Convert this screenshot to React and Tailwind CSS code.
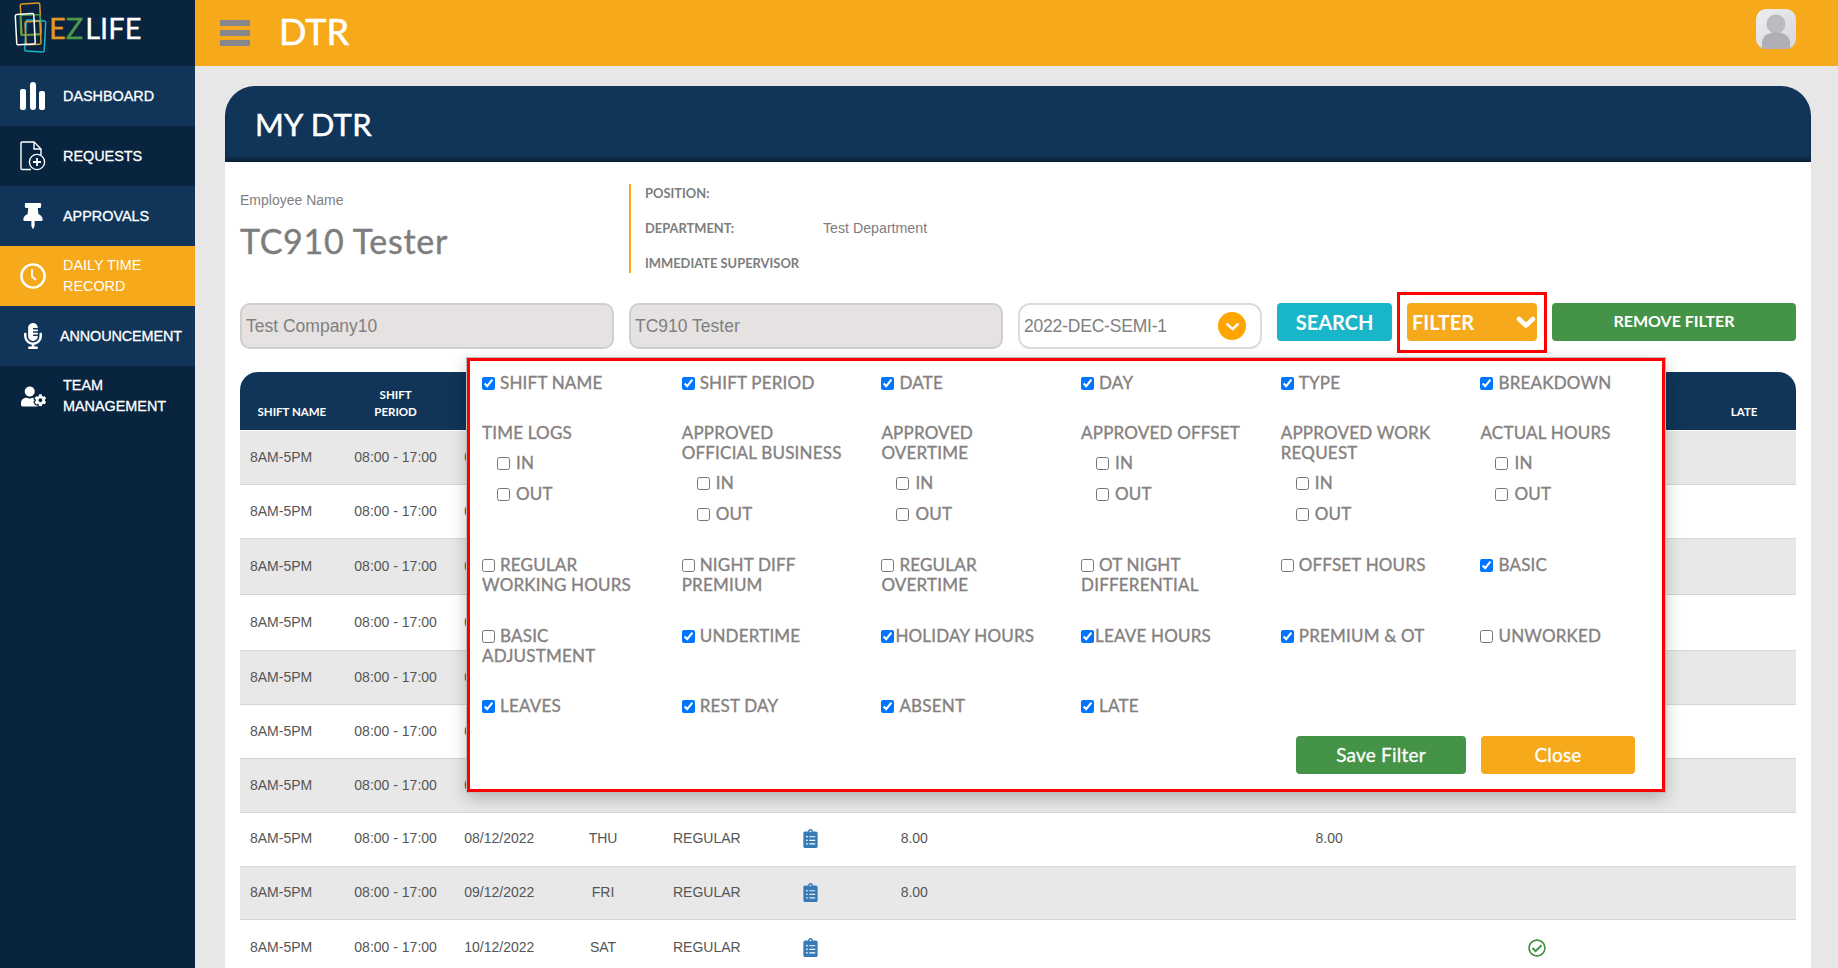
import React from "react";
import { FaThumbtack, FaMicrophoneAlt, FaUserCog, FaClipboardList, FaRegCheckCircle } from "react-icons/fa";

const lato = "font-['Lato','Noto_Sans',sans-serif]";

function DashIcon() {
  return (
    <svg width="26" height="28" viewBox="0 0 26 28" fill="white">
      <rect x="0" y="7" width="6" height="21" rx="2" />
      <rect x="10" y="0" width="6" height="28" rx="3" />
      <rect x="19" y="9" width="6" height="19" rx="2" />
    </svg>
  );
}
function ReqIcon() {
  return (
    <svg width="26" height="30" viewBox="0 0 26 30" fill="none" stroke="white" strokeWidth="1.4">
      <path d="M11 28.500H2a1 1 0 0 1-1-1V2a1 1 0 0 1 1-1h12l7 7v6" />
      <path d="M14 1v7h7" />
      <circle cx="17" cy="21" r="7.600" />
      <path d="M17 17v8M13 21h8" strokeWidth="1.8" />
    </svg>
  );
}
function ClockIcon() {
  return (
    <svg width="26" height="26" viewBox="0 0 26 26" fill="none" stroke="white">
      <circle cx="13" cy="13" r="11.600" strokeWidth="2.4" />
      <path d="M12 6v7.500l4 3.500" strokeWidth="1.8" />
    </svg>
  );
}
function Logo() {
  return (
    <svg width="34" height="54" viewBox="0 0 34 54" fill="none" className="shrink-0">
      <rect x="7" y="3.500" width="19.500" height="31" rx="1.500" stroke="#e09a24" strokeWidth="1.5" transform="rotate(-3 17 19)" />
      <rect x="6.500" y="15" width="20" height="20" rx="1.500" stroke="#4c9a47" strokeWidth="1.5" transform="rotate(-2 17 25)" />
      <rect x="11.500" y="20.500" width="19.500" height="31" rx="1.500" stroke="#19b5c9" strokeWidth="1.5" transform="rotate(3 21 36)" />
      <rect x="11.500" y="21.500" width="15" height="23" rx="1.500" stroke="#e09a24" strokeWidth="1.5" transform="rotate(-3 19 33)" />
      <rect x="2" y="14" width="18.500" height="30.500" rx="1.500" stroke="#ffffff" strokeWidth="1.5" transform="rotate(-3 11 29)" />
    </svg>
  );
}
function Avatar() {
  return (
    <svg width="40" height="40" viewBox="0 0 40 40">
      <defs>
        <linearGradient id="avbg" x1="0" y1="0" x2="1" y2="1">
          <stop offset="0" stopColor="#eceef0" />
          <stop offset="1" stopColor="#d5d7da" />
        </linearGradient>
      </defs>
      <rect width="40" height="40" rx="10" fill="url(#avbg)" />
      <circle cx="20" cy="15" r="9.500" fill="#b9bbc0" />
      <path d="M6 40v-6c0-7 6-10.500 14-10.500S34 27 34 34v6z" fill="#aeb0b5" />
    </svg>
  );
}
function Chev({ w, h, sw }) {
  return (
    <svg width={w} height={h} viewBox="0 0 20 12" fill="none" stroke="white" strokeWidth={sw} strokeLinecap="round" strokeLinejoin="round">
      <path d="M3 3l7 6.500L17 3" />
    </svg>
  );
}

const nav = [
  { label: ["DASHBOARD"], icon: <DashIcon />, bg: "bg-[#103558]" },
  { label: ["REQUESTS"], icon: <ReqIcon />, bg: "bg-[#08243f]" },
  { label: ["APPROVALS"], icon: <FaThumbtack size={26} color="white" />, bg: "bg-[#103558]" },
  { label: ["DAILY TIME", "RECORD"], icon: <ClockIcon />, bg: "bg-[#f6a91b]", thin: true },
  { label: ["ANNOUNCEMENT"], icon: <FaMicrophoneAlt size={26} color="white" />, bg: "bg-[#103558]", tight: true },
  { label: ["TEAM", "MANAGEMENT"], icon: <FaUserCog size={25} color="white" />, bg: "bg-[#08243f]" },
];

const heads = [["SHIFT NAME"], ["SHIFT", "PERIOD"], [""], [""], [""], [""], [""], [""], [""], [""], [""], [""], [""], [""], ["LATE"]];
const days = ["THU", "FRI", "SAT", "SUN", "MON", "TUE", "WED", "THU", "FRI", "SAT"];
const rowH = ["h-[54px]", "h-[54px]", "h-[56px]", "h-[56px]", "h-[54px]", "h-[54px]", "h-[54px]", "h-[54px] pb-[2px]", "h-[53px] pb-[1px]", "h-[56px]"];

function Row({ i }) {
  const d = String(i + 1).padStart(2, "0");
  const shown = i >= 7;
  const isSat = i === 9;
  const cells = [
    "08:00 - 17:00",
    `${d}/12/2022`,
    shown ? days[i] : "",
    shown ? "REGULAR" : "",
    shown ? <FaClipboardList size={19} color="#337ab7" className="mx-auto" /> : "",
    shown && !isSat ? "8.00" : "",
    "", "", "",
    i === 7 ? "8.00" : "",
    "",
    isSat ? <FaRegCheckCircle size={18} color="#449347" className="mx-auto" /> : "",
    "", "",
  ];
  return (
    <div className={`grid grid-cols-[repeat(15,minmax(0,1fr))] items-center ${rowH[i]} border-b border-[#d5d5d5] text-[14px] text-[#555] text-center ${i % 2 === 0 ? "bg-[#e8e8e8]" : "bg-white"}`}>
      <div className="text-left pl-[10px]">8AM-5PM</div>
      {cells.map((c, k) => <div key={k}>{c}</div>)}
    </div>
  );
}

function Chk({ label, checked, tight, sub }) {
  return (
    <label className="block leading-[20px]">
      <input type="checkbox" defaultChecked={checked} className={`align-[-1px] m-0 w-[13px] h-[13px] ${tight ? "mr-[1px]" : sub ? "mr-[6px]" : "mr-[5px]"}`} />
      {label}
    </label>
  );
}
function Group({ title, second }) {
  return (
    <div>
      <div className="leading-[20px]">{title}{second && <><br />{second}</>}</div>
      <div className="pl-[15px] mt-[5px] flex flex-col">
        <div className="h-[30px] flex items-center"><Chk label="IN" sub /></div>
        <div className="h-[31px] flex items-center"><Chk label="OUT" sub /></div>
      </div>
    </div>
  );
}

function Popup() {
  return (
    <div className={`absolute left-[242px] top-[272px] w-[1198px] h-[434px] bg-white border-[3px] border-[#f00] outline outline-1 outline-[#bbb] shadow-[0_6px_16px_rgba(0,0,0,0.25)] pt-[12px] pl-[12px] pr-[27px] text-[#858180] text-[17px] tracking-[0.2px] [-webkit-text-stroke:0.35px] z-10 ${lato}`}>
      <div className="grid grid-cols-[repeat(5,199.7px)_1fr] grid-rows-[50px_132px_71px_70px_20px]">
        <Chk label="SHIFT NAME" checked />
        <Chk label="SHIFT PERIOD" checked />
        <Chk label="DATE" checked />
        <Chk label="DAY" checked />
        <Chk label="TYPE" checked />
        <Chk label="BREAKDOWN" checked />

        <Group title="TIME LOGS" />
        <Group title="APPROVED" second="OFFICIAL BUSINESS" />
        <Group title="APPROVED" second="OVERTIME" />
        <Group title="APPROVED OFFSET" />
        <Group title="APPROVED WORK" second="REQUEST" />
        <Group title="ACTUAL HOURS" />

        <Chk label={<>REGULAR<br />WORKING HOURS</>} />
        <Chk label={<>NIGHT DIFF<br />PREMIUM</>} />
        <Chk label={<>REGULAR<br />OVERTIME</>} />
        <Chk label={<>OT NIGHT<br />DIFFERENTIAL</>} />
        <Chk label="OFFSET HOURS" />
        <Chk label="BASIC" checked />

        <Chk label={<>BASIC<br />ADJUSTMENT</>} />
        <Chk label="UNDERTIME" checked />
        <Chk label="HOLIDAY HOURS" checked tight />
        <Chk label="LEAVE HOURS" checked tight />
        <Chk label="PREMIUM & OT" checked />
        <Chk label="UNWORKED" />

        <Chk label="LEAVES" checked />
        <Chk label="REST DAY" checked />
        <Chk label="ABSENT" checked />
        <Chk label="LATE" checked />
      </div>
      <div className="flex justify-end gap-[15px] mt-[20px] [-webkit-text-stroke:0.3px_white]">
        <button className="w-[170px] h-[38px] rounded-[4px] bg-[#449347] text-white text-[19px]">Save Filter</button>
        <button className="w-[154px] h-[38px] rounded-[4px] bg-[#f6a91b] text-white text-[19px]">Close</button>
      </div>
    </div>
  );
}

export default function App() {
  return (
    <div className="flex h-[968px] overflow-hidden bg-[#e7e7e7] font-['Liberation_Sans',Arial,sans-serif]">
      <aside className="w-[195px] shrink-0 bg-[#08243f]">
        <div className="h-[66px] flex items-start pl-[14px] overflow-hidden">
          <Logo />
          <span className={`ml-[1px] mt-[13px] text-[29px] leading-none [-webkit-text-stroke:0.3px] ${lato}`}>
            <span className="text-[#e09a24]">E</span>
            <span className="text-[#4c9a47]">Z</span>
            <span className="text-white ml-[2px]">LIFE</span>
          </span>
        </div>
        {nav.map((n, i) => (
          <div key={i} className={`h-[60px] flex items-center ${n.bg}`}>
            <div className="w-[63px] pl-[20px] shrink-0 flex">
              <div className="w-[26px] flex justify-center">{n.icon}</div>
            </div>
            <div className={`text-[14.4px] leading-[21px] text-white ${n.thin ? "" : "[-webkit-text-stroke:0.3px]"} ${n.tight ? "-ml-[3px] tracking-[-0.1px]" : ""}`}>
              {n.label.map((l) => <div key={l}>{l}</div>)}
            </div>
          </div>
        ))}
      </aside>

      <div className="flex-1 min-w-0 flex flex-col">
        <header className="h-[66px] shrink-0 bg-[#f6a91b] flex items-center pl-[25px] pr-[42px]">
          <div className="flex flex-col gap-[4px] w-[30px]">
            <div className="h-[6px] rounded-[1px] bg-[#85878c]" />
            <div className="h-[6px] rounded-[1px] bg-[#85878c]" />
            <div className="h-[6px] rounded-[1px] bg-[#85878c]" />
          </div>
          <h1 className={`ml-[29px] -mt-[4px] text-[36px] leading-none text-white [-webkit-text-stroke:0.6px] ${lato}`}>DTR</h1>
          <div className="ml-auto -mt-[8px]"><Avatar /></div>
        </header>

        <main className="flex-1 min-h-0 pt-[20px] pl-[30px] pr-[27px]">
          <div className="relative h-full">
            <div className="h-[76px] rounded-t-[30px] bg-[#103558] flex items-center pl-[30px] shadow-[inset_0_-5px_5px_-2px_rgba(0,0,0,0.45)]">
              <h2 className={`text-[31px] leading-none text-white [-webkit-text-stroke:0.5px] tracking-[0.3px] ${lato}`}>MY DTR</h2>
            </div>
            <div className="bg-white px-[15px] pt-[22px] h-[820px] overflow-hidden">
              <div className="flex h-[89px]">
                <div className="w-[389px] shrink-0 pt-[6px]">
                  <div className="text-[14px] leading-[20px] text-[#808080]">Employee Name</div>
                  <div className={`mt-[11px] text-[34px] leading-[40px] text-[#7d7d7d] [-webkit-text-stroke:0.4px] tracking-[0.7px] ${lato}`}>TC910 Tester</div>
                </div>
                <div className="border-l-[2px] border-[#f6a91b] pl-[14px] text-[#7d7d7d]">
                  {[["POSITION:", ""], ["DEPARTMENT:", "Test Department"], ["IMMEDIATE SUPERVISOR", ""]].map(([a, b]) => (
                    <div key={a} className="h-[35px] flex items-center first:mt-[-8px]">
                      <span className={`w-[178px] shrink-0 whitespace-nowrap text-[12.9px] font-bold ${lato}`}>{a}</span>
                      <span className="text-[14.2px]">{b}</span>
                    </div>
                  ))}
                </div>
              </div>

              <div className="flex gap-[15px] mt-[30px] h-[46px] items-start">
                <div className="w-[374px] h-[46px] rounded-[10px] bg-[#e6e2e2] border-2 border-[#cfcfcf] flex items-center pl-[4px] text-[17.5px] text-[#808080]">Test Company10</div>
                <div className="w-[374px] h-[46px] rounded-[10px] bg-[#e6e2e2] border-2 border-[#cfcfcf] flex items-center pl-[4px] text-[17.5px] text-[#808080]">TC910 Tester</div>
                <div className="w-[244px] h-[46px] rounded-[12px] bg-white border-2 border-[#dcdcdc] flex items-center justify-between pl-[4px] pr-[14px] text-[17.5px] tracking-[-0.2px] text-[#808080]">
                  <span>2022-DEC-SEMI-1</span>
                  <span className="w-[28px] h-[28px] rounded-full bg-[#ffa500] flex items-center justify-center">
                    <Chev w={15} h={9} sw={3.2} />
                  </span>
                </div>
                <button className={`w-[115px] h-[38px] rounded-[4px] bg-[#19b5c9] text-white text-[20px] font-bold ${lato}`}>SEARCH</button>
                <div className="relative">
                  <div className="absolute -left-[10px] -right-[10px] -top-[11px] -bottom-[12px] border-[3px] border-[#f00]" />
                  <button className={`w-[130px] h-[38px] rounded-[4px] bg-[#f6a91b] text-white text-[20px] font-bold flex items-center justify-between pl-[5px] pr-[1px] ${lato}`}>
                    FILTER
                    <Chev w={20} h={12} sw={4.5} />
                  </button>
                </div>
                <button className={`w-[244px] h-[38px] rounded-[4px] bg-[#449347] text-white text-[16px] font-bold pb-[2px] ${lato}`}>REMOVE FILTER</button>
              </div>

              <div className="mt-[23px]">
                <div className={`grid grid-cols-[repeat(15,minmax(0,1fr))] h-[59px] rounded-t-[18px] bg-[#103558] border-b border-white text-white text-[11.5px] font-bold text-center items-end pb-[10px] leading-[17px] ${lato}`}>
                  {heads.map((h, i) => (
                    <div key={i}>{h.map((l) => <div key={l}>{l}</div>)}</div>
                  ))}
                </div>
                {days.map((_, i) => <Row key={i} i={i} />)}
              </div>
            </div>
            <Popup />
          </div>
        </main>
      </div>
    </div>
  );
}
